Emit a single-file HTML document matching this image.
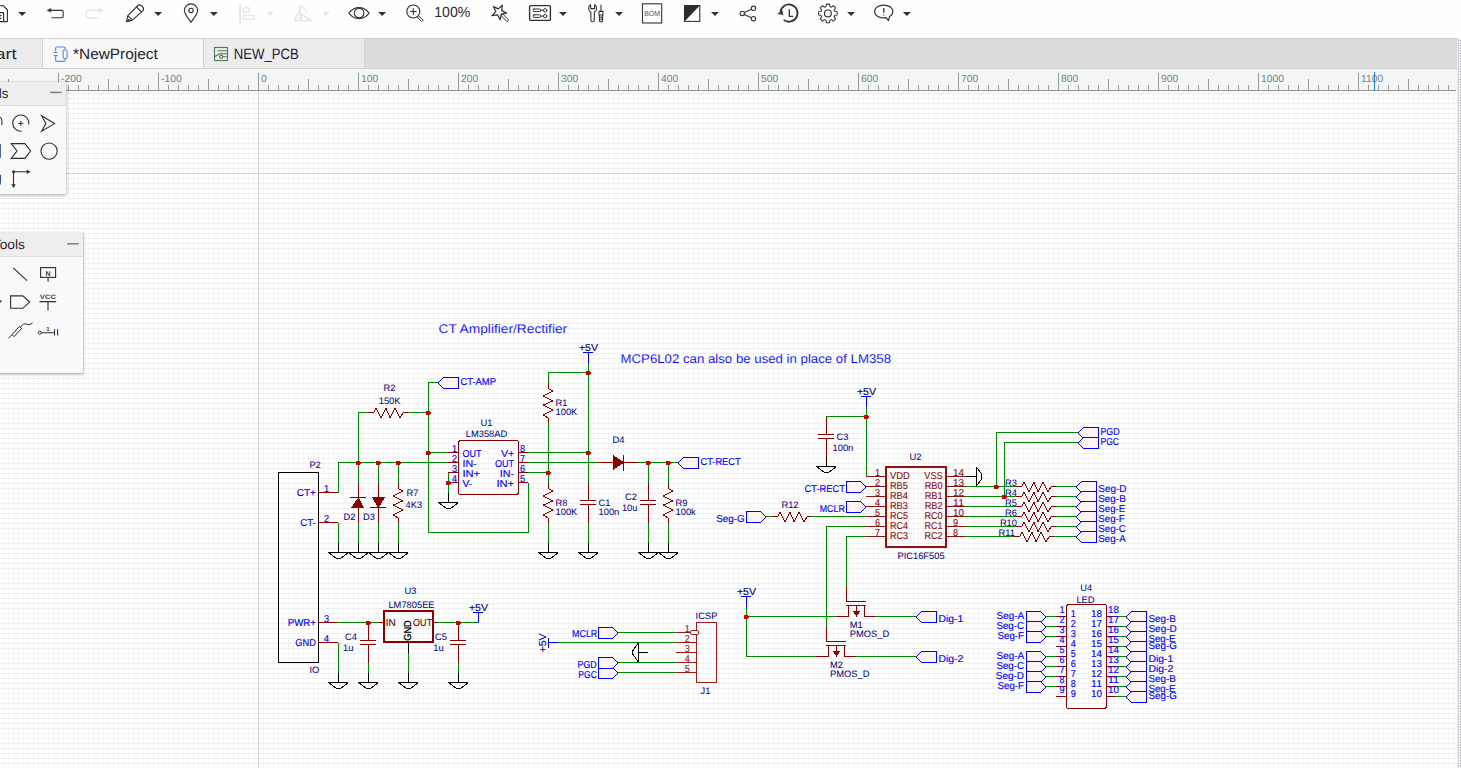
<!DOCTYPE html><html><head><meta charset="utf-8"><title>EasyEDA</title>
<style>html,body{margin:0;padding:0;background:#fff;overflow:hidden}svg{display:block}text{font-family:"Liberation Sans",sans-serif}text{text-rendering:geometricPrecision}</style></head><body>
<svg width="1461" height="768" viewBox="0 0 1461 768">
<defs><pattern id="g" x="3" y="3" width="5" height="5" patternUnits="userSpaceOnUse"><rect x="0" y="0" width="1" height="5" fill="#f4f6f5"/><rect x="0" y="0" width="5" height="1" fill="#f1f1f1"/><rect x="0" y="0" width="1" height="1" fill="#ebebeb"/></pattern>
<filter id="sh" x="-20%" y="-20%" width="140%" height="140%"><feGaussianBlur stdDeviation="1.6"/></filter></defs>
<rect width="1461" height="768" fill="#fff"/>
<rect x="0" y="91" width="1456" height="677" fill="url(#g)"/>
<rect x="258" y="91" width="1" height="677" fill="#d2d2d4"/>
<rect x="0" y="173" width="1456" height="1" fill="#d2d2d4"/>
<g shape-rendering="crispEdges" font-family="Liberation Sans, sans-serif" class="sc">
<rect x="278.5" y="472.5" width="40" height="190" fill="none" stroke="#000"/>
<path d="M318 492.5H338" stroke="#880000" stroke-width="1" fill="none" />
<path d="M318 522.5H338" stroke="#880000" stroke-width="1" fill="none" />
<path d="M318 622.5H338" stroke="#880000" stroke-width="1" fill="none" />
<path d="M318 642.5H338" stroke="#880000" stroke-width="1" fill="none" />
<text x="309.4" y="467.8" font-size="9.33" fill="#000080" stroke="#000080" stroke-width="0.02">P2</text>
<text x="315.85" y="495.8" font-size="10" fill="#0000FF" text-anchor="end" textLength="19.00" lengthAdjust="spacingAndGlyphs" stroke="#0000FF" stroke-width="0.15">CT+</text>
<text x="315.85" y="525.8" font-size="10" fill="#0000FF" text-anchor="end" textLength="15.60" lengthAdjust="spacingAndGlyphs" stroke="#0000FF" stroke-width="0.15">CT-</text>
<text x="315.85" y="625.8" font-size="10" fill="#0000FF" text-anchor="end" textLength="28.08" lengthAdjust="spacingAndGlyphs" stroke="#0000FF" stroke-width="0.15">PWR+</text>
<text x="315.85" y="645.8" font-size="10" fill="#0000FF" text-anchor="end" textLength="20.51" lengthAdjust="spacingAndGlyphs" stroke="#0000FF" stroke-width="0.15">GND</text>
<text x="323.95" y="492" font-size="10" fill="#0000FF" textLength="5.04" lengthAdjust="spacingAndGlyphs" stroke="#0000FF" stroke-width="0.15">1</text>
<text x="323.95" y="522" font-size="10" fill="#0000FF" textLength="5.04" lengthAdjust="spacingAndGlyphs" stroke="#0000FF" stroke-width="0.15">2</text>
<text x="323.95" y="622" font-size="10" fill="#0000FF" textLength="5.04" lengthAdjust="spacingAndGlyphs" stroke="#0000FF" stroke-width="0.15">3</text>
<text x="323.95" y="642" font-size="10" fill="#0000FF" textLength="5.04" lengthAdjust="spacingAndGlyphs" stroke="#0000FF" stroke-width="0.15">4</text>
<text x="309.5" y="673.2" font-size="9.33" fill="#000080" stroke="#000080" stroke-width="0.02">IO</text>
<path d="M338.5 462.5V492.5M338 462.5H448" stroke="#008800" stroke-width="1" fill="none" />
<path d="M338.5 522.5V542.5" stroke="#008800" stroke-width="1" fill="none" />
<path d="M358.5 412.5V482.5M358 412.5H368" stroke="#008800" stroke-width="1" fill="none" />
<path d="M408 412.5H428" stroke="#008800" stroke-width="1" fill="none" />
<path d="M378.5 462.5V482.5" stroke="#008800" stroke-width="1" fill="none" />
<path d="M398.5 462.5V482.5" stroke="#008800" stroke-width="1" fill="none" />
<path d="M358.5 522.5V542.5" stroke="#008800" stroke-width="1" fill="none" />
<path d="M378.5 522.5V542.5" stroke="#008800" stroke-width="1" fill="none" />
<path d="M398.5 522.5V542.5" stroke="#008800" stroke-width="1" fill="none" />
<path d="M338.5 542.5V552.5" stroke="#000000" stroke-width="1" fill="none" />
<path d="M328 552.5 L348 552.5" stroke="#000000" stroke-width="1" fill="none" />
<path d="M328.5 552.5 L336.5 558.5 L340.5 558.5 L348.5 552.5" stroke="#000000" stroke-width="1" fill="none" />
<path d="M358.5 542.5V552.5" stroke="#000000" stroke-width="1" fill="none" />
<path d="M348 552.5 L368 552.5" stroke="#000000" stroke-width="1" fill="none" />
<path d="M348.5 552.5 L356.5 558.5 L360.5 558.5 L368.5 552.5" stroke="#000000" stroke-width="1" fill="none" />
<path d="M378.5 542.5V552.5" stroke="#000000" stroke-width="1" fill="none" />
<path d="M368 552.5 L388 552.5" stroke="#000000" stroke-width="1" fill="none" />
<path d="M368.5 552.5 L376.5 558.5 L380.5 558.5 L388.5 552.5" stroke="#000000" stroke-width="1" fill="none" />
<path d="M398.5 542.5V552.5" stroke="#000000" stroke-width="1" fill="none" />
<path d="M388 552.5 L408 552.5" stroke="#000000" stroke-width="1" fill="none" />
<path d="M388.5 552.5 L396.5 558.5 L400.5 558.5 L408.5 552.5" stroke="#000000" stroke-width="1" fill="none" />
<path d="M368 412.5 L373.5 412.5 L376 408.5 L381 417.5 L386 408.5 L390 417.5 L395 408.5 L400 417.5 L403.5 412.5 L408 412.5" stroke="#880000" stroke-width="1" fill="none" />
<text x="389.4" y="390.6" font-size="9.33" fill="#000080" text-anchor="middle" stroke="#000080" stroke-width="0.02">R2</text>
<text x="389.6" y="403.8" font-size="9.33" fill="#000080" text-anchor="middle" stroke="#000080" stroke-width="0.02">150K</text>
<path d="M358.5 482.5V522.5" stroke="#880000" stroke-width="1" fill="none" />
<path d="M350 497.5 L366 497.5" stroke="#880000" stroke-width="1" fill="none" />
<path d="M358.4 497.4 L364.3 508 L350.8 508Z" fill="#880000"/>
<path d="M378.5 482.5V522.5" stroke="#880000" stroke-width="1" fill="none" />
<path d="M370 507.5 L386 507.5" stroke="#880000" stroke-width="1" fill="none" />
<path d="M378.5 508.2 L385.2 497 L371.8 497Z" fill="#880000"/>
<text x="343.5" y="520" font-size="9.33" fill="#000080" stroke="#000080" stroke-width="0.02">D2</text>
<text x="363" y="520" font-size="9.33" fill="#000080" stroke="#000080" stroke-width="0.02">D3</text>
<path d="M398.5 482.5 L398.5 488.5 L402.5 491 L393.5 496 L402.5 501 L393.5 505 L402.5 510 L393.5 515 L398.5 518.5 L398.5 522.5" stroke="#880000" stroke-width="1" fill="none" />
<text x="406.5" y="496" font-size="9.33" fill="#000080" stroke="#000080" stroke-width="0.02">R7</text>
<text x="405.5" y="508" font-size="9.33" fill="#000080" stroke="#000080" stroke-width="0.02">4K3</text>
<path d="M428.5 382.5V532.5M428 382.5H438" stroke="#008800" stroke-width="1" fill="none" />
<path d="M438.5 383 L443.5 377.5 L458.5 377.5 L458.5 388.5 L443.5 388.5Z" fill="#FCF4F4"/>
<path d="M443 377.5H458.5V388.5H443" stroke="#0000FF" fill="none"/>
<path d="M443 377.5H444L439 383H438ZM438 383H439L444 388.5H443Z" fill="#0000FF"/>
<text x="460.45" y="384.9" font-size="10" fill="#0000FF" textLength="35.48" lengthAdjust="spacingAndGlyphs" stroke="#0000FF" stroke-width="0.15">CT-AMP</text>
<path d="M428 452.5H448" stroke="#008800" stroke-width="1" fill="none" />
<path d="M428 532.5H528M528.5 482.5V532.5" stroke="#008800" stroke-width="1" fill="none" />
<rect x="458.5" y="440.5" width="60" height="54" rx="2.5" fill="none" stroke="#880000"/>
<path d="M448 452.5H458" stroke="#880000" stroke-width="1" fill="none" />
<path d="M518 452.5H528" stroke="#880000" stroke-width="1" fill="none" />
<text x="457.15" y="451.5" font-size="10" fill="#0000FF" text-anchor="end" textLength="5.04" lengthAdjust="spacingAndGlyphs" stroke="#0000FF" stroke-width="0.15">1</text>
<text x="519.95" y="451.5" font-size="10" fill="#0000FF" textLength="5.04" lengthAdjust="spacingAndGlyphs" stroke="#0000FF" stroke-width="0.15">8</text>
<path d="M448 462.5H458" stroke="#880000" stroke-width="1" fill="none" />
<path d="M518 462.5H528" stroke="#880000" stroke-width="1" fill="none" />
<text x="457.15" y="461.5" font-size="10" fill="#0000FF" text-anchor="end" textLength="5.04" lengthAdjust="spacingAndGlyphs" stroke="#0000FF" stroke-width="0.15">2</text>
<text x="519.95" y="461.5" font-size="10" fill="#0000FF" textLength="5.04" lengthAdjust="spacingAndGlyphs" stroke="#0000FF" stroke-width="0.15">7</text>
<path d="M448 472.5H458" stroke="#880000" stroke-width="1" fill="none" />
<path d="M518 472.5H528" stroke="#880000" stroke-width="1" fill="none" />
<text x="457.15" y="471.5" font-size="10" fill="#0000FF" text-anchor="end" textLength="5.04" lengthAdjust="spacingAndGlyphs" stroke="#0000FF" stroke-width="0.15">3</text>
<text x="519.95" y="471.5" font-size="10" fill="#0000FF" textLength="5.04" lengthAdjust="spacingAndGlyphs" stroke="#0000FF" stroke-width="0.15">6</text>
<path d="M448 482.5H458" stroke="#880000" stroke-width="1" fill="none" />
<path d="M518 482.5H528" stroke="#880000" stroke-width="1" fill="none" />
<text x="457.15" y="481.5" font-size="10" fill="#0000FF" text-anchor="end" textLength="5.04" lengthAdjust="spacingAndGlyphs" stroke="#0000FF" stroke-width="0.15">4</text>
<text x="519.95" y="481.5" font-size="10" fill="#0000FF" textLength="5.04" lengthAdjust="spacingAndGlyphs" stroke="#0000FF" stroke-width="0.15">5</text>
<text x="462.45" y="456.5" font-size="10" fill="#0000FF" textLength="19.03" lengthAdjust="spacingAndGlyphs" stroke="#0000FF" stroke-width="0.15">OUT</text>
<text x="514.05" y="456.5" font-size="10" fill="#0000FF" text-anchor="end" textLength="13.12" lengthAdjust="spacingAndGlyphs" stroke="#0000FF" stroke-width="0.15">V+</text>
<text x="462.45" y="466.5" font-size="10" fill="#0000FF" textLength="14.25" lengthAdjust="spacingAndGlyphs" stroke="#0000FF" stroke-width="0.15">IN-</text>
<text x="514.05" y="466.5" font-size="10" fill="#0000FF" text-anchor="end" textLength="19.03" lengthAdjust="spacingAndGlyphs" stroke="#0000FF" stroke-width="0.15">OUT</text>
<text x="462.45" y="476.5" font-size="10" fill="#0000FF" textLength="17.64" lengthAdjust="spacingAndGlyphs" stroke="#0000FF" stroke-width="0.15">IN+</text>
<text x="514.05" y="476.5" font-size="10" fill="#0000FF" text-anchor="end" textLength="14.25" lengthAdjust="spacingAndGlyphs" stroke="#0000FF" stroke-width="0.15">IN-</text>
<text x="462.45" y="486.5" font-size="10" fill="#0000FF" textLength="9.72" lengthAdjust="spacingAndGlyphs" stroke="#0000FF" stroke-width="0.15">V-</text>
<text x="514.05" y="486.5" font-size="10" fill="#0000FF" text-anchor="end" textLength="17.64" lengthAdjust="spacingAndGlyphs" stroke="#0000FF" stroke-width="0.15">IN+</text>
<text x="486.5" y="426" font-size="9.33" fill="#000080" text-anchor="middle" stroke="#000080" stroke-width="0.02">U1</text>
<text x="486.5" y="437" font-size="9.33" fill="#000080" text-anchor="middle" stroke="#000080" stroke-width="0.02">LM358AD</text>
<path d="M448.5 472.5V492.5" stroke="#008800" stroke-width="1" fill="none" />
<path d="M448.5 492.5V502.5" stroke="#000000" stroke-width="1" fill="none" />
<path d="M438 502.5 L458 502.5" stroke="#000000" stroke-width="1" fill="none" />
<path d="M438.5 502.5 L446.5 508.5 L450.5 508.5 L458.5 502.5" stroke="#000000" stroke-width="1" fill="none" />
<path d="M528 452.5H588" stroke="#008800" stroke-width="1" fill="none" />
<path d="M528 462.5H598" stroke="#008800" stroke-width="1" fill="none" />
<path d="M528 472.5H548" stroke="#008800" stroke-width="1" fill="none" />
<path d="M548.5 422.5V482.5" stroke="#008800" stroke-width="1" fill="none" />
<path d="M548.5 372.5V382.5M548 372.5H588" stroke="#008800" stroke-width="1" fill="none" />
<path d="M588.5 362.5V482.5" stroke="#008800" stroke-width="1" fill="none" />
<path d="M548.5 382.5 L548.5 388.5 L552.5 391 L543.5 396 L552.5 401 L543.5 405 L552.5 410 L543.5 415 L548.5 418.5 L548.5 422.5" stroke="#880000" stroke-width="1" fill="none" />
<text x="555.5" y="406" font-size="9.33" fill="#000080" stroke="#000080" stroke-width="0.02">R1</text>
<text x="555.5" y="415.3" font-size="9.33" fill="#000080" stroke="#000080" stroke-width="0.02">100K</text>
<path d="M588.5 352.5V362.5" stroke="#0000FF" stroke-width="1" fill="none" />
<path d="M583 352.5H593" stroke="#0000FF" stroke-width="1" fill="none" />
<text x="588.4" y="350.7" font-size="10" fill="#000080" text-anchor="middle" textLength="19.05" lengthAdjust="spacingAndGlyphs" stroke="#000080" stroke-width="0.15">+5V</text>
<path d="M548.5 482.5 L548.5 488.5 L552.5 491 L543.5 496 L552.5 501 L543.5 505 L552.5 510 L543.5 515 L548.5 518.5 L548.5 522.5" stroke="#880000" stroke-width="1" fill="none" />
<text x="555.5" y="506" font-size="9.33" fill="#000080" stroke="#000080" stroke-width="0.02">R8</text>
<text x="555.5" y="515.3" font-size="9.33" fill="#000080" stroke="#000080" stroke-width="0.02">100K</text>
<path d="M588.5 482.5V500.5" stroke="#880000" stroke-width="1" fill="none" />
<path d="M580 500.5H596" stroke="#880000" stroke-width="1" fill="none" />
<path d="M580 504.5H596" stroke="#880000" stroke-width="1" fill="none" />
<path d="M588.5 504.5V522.5" stroke="#880000" stroke-width="1" fill="none" />
<text x="598.5" y="506" font-size="9.33" fill="#000080" stroke="#000080" stroke-width="0.02">C1</text>
<text x="598.5" y="515.3" font-size="9.33" fill="#000080" stroke="#000080" stroke-width="0.02">100n</text>
<path d="M598 462.5H638" stroke="#880000" stroke-width="1" fill="none" />
<path d="M623.5 454.5V470.5" stroke="#880000" stroke-width="1" fill="none" />
<path d="M623.5 462.5 L613.5 456 L613.5 469Z" fill="#880000" stroke="#880000"/>
<text x="612.5" y="443.4" font-size="9.33" fill="#000080" stroke="#000080" stroke-width="0.02">D4</text>
<path d="M638 462.5H678" stroke="#008800" stroke-width="1" fill="none" />
<path d="M648.5 462.5V482.5" stroke="#008800" stroke-width="1" fill="none" />
<path d="M668.5 462.5V482.5" stroke="#008800" stroke-width="1" fill="none" />
<path d="M678.5 463 L683.5 457.5 L698.5 457.5 L698.5 468.5 L683.5 468.5Z" fill="#FCF4F4"/>
<path d="M683 457.5H698.5V468.5H683" stroke="#0000FF" fill="none"/>
<path d="M683 457.5H684L679 463H678ZM678 463H679L684 468.5H683Z" fill="#0000FF"/>
<text x="700.45" y="464.9" font-size="10" fill="#0000FF" textLength="40.25" lengthAdjust="spacingAndGlyphs" stroke="#0000FF" stroke-width="0.15">CT-RECT</text>
<path d="M648.5 482.5V500.5" stroke="#880000" stroke-width="1" fill="none" />
<path d="M640 500.5H656" stroke="#880000" stroke-width="1" fill="none" />
<path d="M640 504.5H656" stroke="#880000" stroke-width="1" fill="none" />
<path d="M648.5 504.5V522.5" stroke="#880000" stroke-width="1" fill="none" />
<text x="637" y="500" font-size="9.33" fill="#000080" text-anchor="end" stroke="#000080" stroke-width="0.02">C2</text>
<text x="637.5" y="511" font-size="9.33" fill="#000080" text-anchor="end" stroke="#000080" stroke-width="0.02">10u</text>
<path d="M668.5 482.5 L668.5 488.5 L672.5 491 L663.5 496 L672.5 501 L663.5 505 L672.5 510 L663.5 515 L668.5 518.5 L668.5 522.5" stroke="#880000" stroke-width="1" fill="none" />
<text x="675.5" y="506" font-size="9.33" fill="#000080" stroke="#000080" stroke-width="0.02">R9</text>
<text x="675.5" y="515.3" font-size="9.33" fill="#000080" stroke="#000080" stroke-width="0.02">100k</text>
<path d="M548.5 522.5V542.5" stroke="#008800" stroke-width="1" fill="none" />
<path d="M548.5 542.5V552.5" stroke="#000000" stroke-width="1" fill="none" />
<path d="M538 552.5 L558 552.5" stroke="#000000" stroke-width="1" fill="none" />
<path d="M538.5 552.5 L546.5 558.5 L550.5 558.5 L558.5 552.5" stroke="#000000" stroke-width="1" fill="none" />
<path d="M588.5 522.5V542.5" stroke="#008800" stroke-width="1" fill="none" />
<path d="M588.5 542.5V552.5" stroke="#000000" stroke-width="1" fill="none" />
<path d="M578 552.5 L598 552.5" stroke="#000000" stroke-width="1" fill="none" />
<path d="M578.5 552.5 L586.5 558.5 L590.5 558.5 L598.5 552.5" stroke="#000000" stroke-width="1" fill="none" />
<path d="M648.5 522.5V542.5" stroke="#008800" stroke-width="1" fill="none" />
<path d="M648.5 542.5V552.5" stroke="#000000" stroke-width="1" fill="none" />
<path d="M638 552.5 L658 552.5" stroke="#000000" stroke-width="1" fill="none" />
<path d="M638.5 552.5 L646.5 558.5 L650.5 558.5 L658.5 552.5" stroke="#000000" stroke-width="1" fill="none" />
<path d="M668.5 522.5V542.5" stroke="#008800" stroke-width="1" fill="none" />
<path d="M668.5 542.5V552.5" stroke="#000000" stroke-width="1" fill="none" />
<path d="M658 552.5 L678 552.5" stroke="#000000" stroke-width="1" fill="none" />
<path d="M658.5 552.5 L666.5 558.5 L670.5 558.5 L678.5 552.5" stroke="#000000" stroke-width="1" fill="none" />
<path d="M338 622.5H378" stroke="#008800" stroke-width="1" fill="none" />
<path d="M378 622.5H383" stroke="#880000" stroke-width="1" fill="none" />
<path d="M338.5 642.5V672.5" stroke="#008800" stroke-width="1" fill="none" />
<path d="M338.5 672.5V682.5" stroke="#000000" stroke-width="1" fill="none" />
<path d="M328 682.5 L348 682.5" stroke="#000000" stroke-width="1" fill="none" />
<path d="M328.5 682.5 L336.5 688.5 L340.5 688.5 L348.5 682.5" stroke="#000000" stroke-width="1" fill="none" />
<path d="M368.5 622.5V640.5" stroke="#880000" stroke-width="1" fill="none" />
<path d="M360 640.5H376" stroke="#880000" stroke-width="1" fill="none" />
<path d="M360 644.5H376" stroke="#880000" stroke-width="1" fill="none" />
<path d="M368.5 644.5V662.5" stroke="#880000" stroke-width="1" fill="none" />
<path d="M368.5 662.5V672.5" stroke="#008800" stroke-width="1" fill="none" />
<path d="M368.5 672.5V682.5" stroke="#000000" stroke-width="1" fill="none" />
<path d="M358 682.5 L378 682.5" stroke="#000000" stroke-width="1" fill="none" />
<path d="M358.5 682.5 L366.5 688.5 L370.5 688.5 L378.5 682.5" stroke="#000000" stroke-width="1" fill="none" />
<text x="345" y="640" font-size="9.33" fill="#000080" stroke="#000080" stroke-width="0.02">C4</text>
<text x="343" y="651.3" font-size="9.33" fill="#000080" stroke="#000080" stroke-width="0.02">1u</text>
<rect x="384" y="611" width="49" height="31" fill="none" stroke="#880000" stroke-width="2"/>
<text x="385.65" y="625.6" font-size="10" fill="#880000" textLength="10.01" lengthAdjust="spacingAndGlyphs" stroke="#880000" stroke-width="0.15">IN</text>
<text x="432.15" y="625.6" font-size="10" fill="#880000" text-anchor="end" textLength="19.03" lengthAdjust="spacingAndGlyphs" stroke="#880000" stroke-width="0.15">OUT</text>
<text x="411" y="630.5" font-size="10" fill="#000000" text-anchor="middle" textLength="20.51" lengthAdjust="spacingAndGlyphs" transform="rotate(-90 411 630.5)" style="stroke:#000;stroke-width:.3px">GND</text>
<text x="410.5" y="594" font-size="9.33" fill="#000080" text-anchor="middle" stroke="#000080" stroke-width="0.02">U3</text>
<text x="411.5" y="608.3" font-size="9.33" fill="#000080" text-anchor="middle" stroke="#000080" stroke-width="0.02">LM7805EE</text>
<path d="M408.5 642.5V652.5" stroke="#000000" stroke-width="1" fill="none" />
<path d="M408.5 652.5V672.5" stroke="#008800" stroke-width="1" fill="none" />
<path d="M408.5 672.5V682.5" stroke="#000000" stroke-width="1" fill="none" />
<path d="M398 682.5 L418 682.5" stroke="#000000" stroke-width="1" fill="none" />
<path d="M398.5 682.5 L406.5 688.5 L410.5 688.5 L418.5 682.5" stroke="#000000" stroke-width="1" fill="none" />
<path d="M433 622.5H438" stroke="#880000" stroke-width="1" fill="none" />
<path d="M438 622.5H478" stroke="#008800" stroke-width="1" fill="none" />
<path d="M478.5 612.5V622.5" stroke="#0000FF" stroke-width="1" fill="none" />
<path d="M473 612.5H483" stroke="#0000FF" stroke-width="1" fill="none" />
<text x="478.4" y="610.7" font-size="10" fill="#000080" text-anchor="middle" textLength="19.05" lengthAdjust="spacingAndGlyphs" stroke="#000080" stroke-width="0.15">+5V</text>
<path d="M458.5 622.5V640.5" stroke="#880000" stroke-width="1" fill="none" />
<path d="M450 640.5H466" stroke="#880000" stroke-width="1" fill="none" />
<path d="M450 644.5H466" stroke="#880000" stroke-width="1" fill="none" />
<path d="M458.5 644.5V662.5" stroke="#880000" stroke-width="1" fill="none" />
<path d="M458.5 662.5V672.5" stroke="#008800" stroke-width="1" fill="none" />
<path d="M458.5 672.5V682.5" stroke="#000000" stroke-width="1" fill="none" />
<path d="M448 682.5 L468 682.5" stroke="#000000" stroke-width="1" fill="none" />
<path d="M448.5 682.5 L456.5 688.5 L460.5 688.5 L468.5 682.5" stroke="#000000" stroke-width="1" fill="none" />
<text x="435" y="640" font-size="9.33" fill="#000080" stroke="#000080" stroke-width="0.02">C5</text>
<text x="433.3" y="651.3" font-size="9.33" fill="#000080" stroke="#000080" stroke-width="0.02">1u</text>
<rect x="696.5" y="622.5" width="20" height="60" fill="none" stroke="#9A1E1E"/>
<path d="M676 632.5H696" stroke="#9A1E1E" stroke-width="1" fill="none" />
<text x="684.85" y="631.5" font-size="10" fill="#9A1E1E" textLength="5.04" lengthAdjust="spacingAndGlyphs" stroke="#9A1E1E" stroke-width="0.15">1</text>
<path d="M676 642.5H696" stroke="#9A1E1E" stroke-width="1" fill="none" />
<text x="684.85" y="641.5" font-size="10" fill="#9A1E1E" textLength="5.04" lengthAdjust="spacingAndGlyphs" stroke="#9A1E1E" stroke-width="0.15">2</text>
<path d="M676 652.5H696" stroke="#9A1E1E" stroke-width="1" fill="none" />
<text x="684.85" y="651.5" font-size="10" fill="#9A1E1E" textLength="5.04" lengthAdjust="spacingAndGlyphs" stroke="#9A1E1E" stroke-width="0.15">3</text>
<path d="M676 662.5H696" stroke="#9A1E1E" stroke-width="1" fill="none" />
<text x="684.85" y="661.5" font-size="10" fill="#9A1E1E" textLength="5.04" lengthAdjust="spacingAndGlyphs" stroke="#9A1E1E" stroke-width="0.15">4</text>
<path d="M676 672.5H696" stroke="#9A1E1E" stroke-width="1" fill="none" />
<text x="684.85" y="671.5" font-size="10" fill="#9A1E1E" textLength="5.04" lengthAdjust="spacingAndGlyphs" stroke="#9A1E1E" stroke-width="0.15">5</text>
<ellipse cx="694.5" cy="632.5" rx="4" ry="2.5" fill="#fff" stroke="#9A1E1E"/>
<text x="706.5" y="619" font-size="9.33" fill="#000080" text-anchor="middle" stroke="#000080" stroke-width="0.02">ICSP</text>
<text x="705.5" y="693.5" font-size="9.33" fill="#000080" text-anchor="middle" stroke="#000080" stroke-width="0.02">J1</text>
<path d="M617.5 633 L612.5 627.5 L598.5 627.5 L598.5 638.5 L612.5 638.5Z" fill="#FCF4F4"/>
<path d="M613 627.5H598.5V638.5H613" stroke="#0000FF" fill="none"/>
<path d="M612 627.5H613L618 633H617ZM617 633H618L613 638.5H612Z" fill="#0000FF"/>
<text x="597.25" y="637.3" font-size="10" fill="#0000FF" text-anchor="end" textLength="25.17" lengthAdjust="spacingAndGlyphs" stroke="#0000FF" stroke-width="0.15">MCLR</text>
<path d="M618 632.5H676" stroke="#008800" stroke-width="1" fill="none" />
<path d="M548.5 637.5V647.5" stroke="#0000FF" stroke-width="1" fill="none" />
<path d="M548 642.5H558" stroke="#0000FF" stroke-width="1" fill="none" />
<path d="M558 642.5H676" stroke="#008800" stroke-width="1" fill="none" />
<text x="545.9" y="643" font-size="10" fill="#000080" text-anchor="middle" textLength="19.05" lengthAdjust="spacingAndGlyphs" transform="rotate(-90 545.9 643)" stroke="#000080" stroke-width="0.15">+5V</text>
<path d="M638 652.5H648" stroke="#000000" stroke-width="1" fill="none" />
<path d="M638.5 642.5V662.5" stroke="#000000" stroke-width="1" fill="none" />
<path d="M638.5 643 L632.9 650.5 L632.9 654.5 L638.5 662" stroke="#000000" stroke-width="1" fill="none" />
<path d="M617.5 673 L612.5 667.5 L598.5 667.5 L598.5 678.5 L612.5 678.5Z" fill="#FCF4F4"/>
<path d="M613 667.5H598.5V678.5H613" stroke="#0000FF" fill="none"/>
<path d="M612 667.5H613L618 673H617ZM617 673H618L613 678.5H612Z" fill="#0000FF"/>
<path d="M617.5 663 L612.5 657.5 L598.5 657.5 L598.5 668.5 L612.5 668.5Z" fill="#FCF4F4"/>
<path d="M613 657.5H598.5V668.5H613" stroke="#0000FF" fill="none"/>
<path d="M612 657.5H613L618 663H617ZM617 663H618L613 668.5H612Z" fill="#0000FF"/>
<text x="596.65" y="667.7" font-size="10" fill="#0000FF" text-anchor="end" textLength="19.16" lengthAdjust="spacingAndGlyphs" stroke="#0000FF" stroke-width="0.15">PGD</text>
<text x="596.85" y="677.8" font-size="10" fill="#0000FF" text-anchor="end" textLength="18.48" lengthAdjust="spacingAndGlyphs" stroke="#0000FF" stroke-width="0.15">PGC</text>
<path d="M618 662.5H676" stroke="#008800" stroke-width="1" fill="none" />
<path d="M618 672.5H676" stroke="#008800" stroke-width="1" fill="none" />
<path d="M746.5 596.5V606.5" stroke="#0000FF" stroke-width="1" fill="none" />
<path d="M741 596.5H751" stroke="#0000FF" stroke-width="1" fill="none" />
<text x="746.4" y="594.7" font-size="10" fill="#000080" text-anchor="middle" textLength="19.05" lengthAdjust="spacingAndGlyphs" stroke="#000080" stroke-width="0.15">+5V</text>
<path d="M746.5 606.5V656.5M746 656.5H816" stroke="#008800" stroke-width="1" fill="none" />
<path d="M746 616.5H836" stroke="#008800" stroke-width="1" fill="none" />
<path d="M836 616.5H848M848.5 605.5V616.5" stroke="#880000" stroke-width="1" fill="none" />
<path d="M864 616.5H876M864.5 605.5V616.5" stroke="#880000" stroke-width="1" fill="none" />
<path d="M856.5 605.5V616.5" stroke="#880000" stroke-width="1" fill="none" />
<path d="M846 605.5H866" stroke="#880000" stroke-width="1" fill="none" />
<path d="M846 601.5H866" stroke="#880000" stroke-width="1" fill="none" />
<path d="M846.5 586.5V601.5" stroke="#880000" stroke-width="1" fill="none" />
<path d="M852.8 611 L860.2 611 L856.5 617.1Z" fill="#880000"/>
<path d="M816 656.5H828M828.5 645.5V656.5" stroke="#880000" stroke-width="1" fill="none" />
<path d="M844 656.5H856M844.5 645.5V656.5" stroke="#880000" stroke-width="1" fill="none" />
<path d="M836.5 645.5V656.5" stroke="#880000" stroke-width="1" fill="none" />
<path d="M826 645.5H846" stroke="#880000" stroke-width="1" fill="none" />
<path d="M826 641.5H846" stroke="#880000" stroke-width="1" fill="none" />
<path d="M826.5 626.5V641.5" stroke="#880000" stroke-width="1" fill="none" />
<path d="M832.8 651 L840.2 651 L836.5 657.1Z" fill="#880000"/>
<path d="M876 616.5H916" stroke="#008800" stroke-width="1" fill="none" />
<path d="M856 656.5H916" stroke="#008800" stroke-width="1" fill="none" />
<path d="M916.5 617 L921.5 611.5 L936.5 611.5 L936.5 622.5 L921.5 622.5Z" fill="#FCF4F4"/>
<path d="M921 611.5H936.5V622.5H921" stroke="#0000FF" fill="none"/>
<path d="M921 611.5H922L917 617H916ZM916 617H917L922 622.5H921Z" fill="#0000FF"/>
<path d="M916.5 657 L921.5 651.5 L936.5 651.5 L936.5 662.5 L921.5 662.5Z" fill="#FCF4F4"/>
<path d="M921 651.5H936.5V662.5H921" stroke="#0000FF" fill="none"/>
<path d="M921 651.5H922L917 657H916ZM916 657H917L922 662.5H921Z" fill="#0000FF"/>
<text x="938.45" y="621.8" font-size="10" fill="#0000FF" textLength="24.84" lengthAdjust="spacingAndGlyphs" stroke="#0000FF" stroke-width="0.15">Dig-1</text>
<text x="938.45" y="661.8" font-size="10" fill="#0000FF" textLength="24.84" lengthAdjust="spacingAndGlyphs" stroke="#0000FF" stroke-width="0.15">Dig-2</text>
<text x="849.8" y="628" font-size="9.33" fill="#000080" stroke="#000080" stroke-width="0.02">M1</text>
<text x="849.8" y="637" font-size="9.33" fill="#000080" stroke="#000080" stroke-width="0.02">PMOS_D</text>
<text x="830" y="667.7" font-size="9.33" fill="#000080" stroke="#000080" stroke-width="0.02">M2</text>
<text x="830" y="676.7" font-size="9.33" fill="#000080" stroke="#000080" stroke-width="0.02">PMOS_D</text>
<path d="M846.5 536.5V586.5M846 536.5H866" stroke="#008800" stroke-width="1" fill="none" />
<path d="M826.5 526.5V626.5M826 526.5H866" stroke="#008800" stroke-width="1" fill="none" />
<path d="M866.5 396.5V406.5" stroke="#0000FF" stroke-width="1" fill="none" />
<path d="M861 396.5H871" stroke="#0000FF" stroke-width="1" fill="none" />
<text x="866.4" y="394.7" font-size="10" fill="#000080" text-anchor="middle" textLength="19.05" lengthAdjust="spacingAndGlyphs" stroke="#000080" stroke-width="0.15">+5V</text>
<path d="M866.5 406.5V476.5" stroke="#008800" stroke-width="1" fill="none" />
<path d="M826 416.5H866" stroke="#008800" stroke-width="1" fill="none" />
<path d="M826.5 416.5V434.5" stroke="#880000" stroke-width="1" fill="none" />
<path d="M818 434.5H834" stroke="#880000" stroke-width="1" fill="none" />
<path d="M818 438.5H834" stroke="#880000" stroke-width="1" fill="none" />
<path d="M826.5 438.5V456.5" stroke="#880000" stroke-width="1" fill="none" />
<path d="M826.5 456.5V466.5" stroke="#000000" stroke-width="1" fill="none" />
<path d="M816 466.5 L836 466.5" stroke="#000000" stroke-width="1" fill="none" />
<path d="M816.5 466.5 L824.5 472.5 L828.5 472.5 L836.5 466.5" stroke="#000000" stroke-width="1" fill="none" />
<text x="836.5" y="440" font-size="9.33" fill="#000080" stroke="#000080" stroke-width="0.02">C3</text>
<text x="832.5" y="451.2" font-size="9.33" fill="#000080" stroke="#000080" stroke-width="0.02">100n</text>
<rect x="886" y="467" width="60" height="80" fill="none" stroke="#8B1414" stroke-width="2"/>
<path d="M866 476.5H885" stroke="#8B1414" stroke-width="1" fill="none" />
<path d="M947 476.5H966" stroke="#8B1414" stroke-width="1" fill="none" />
<text x="889.95" y="479.4" font-size="10" fill="#8B1414" textLength="19.88" lengthAdjust="spacingAndGlyphs" stroke="#8B1414" stroke-width="0.15">VDD</text>
<text x="942.55" y="479.4" font-size="10" fill="#8B1414" text-anchor="end" textLength="18.25" lengthAdjust="spacingAndGlyphs" stroke="#8B1414" stroke-width="0.15">VSS</text>
<text x="875.05" y="475.5" font-size="10" fill="#8B1414" textLength="5.04" lengthAdjust="spacingAndGlyphs" stroke="#8B1414" stroke-width="0.15">1</text>
<text x="953.05" y="475.5" font-size="10" fill="#8B1414" textLength="10.97" lengthAdjust="spacingAndGlyphs" stroke="#8B1414" stroke-width="0.15">14</text>
<path d="M866 486.5H885" stroke="#8B1414" stroke-width="1" fill="none" />
<path d="M947 486.5H966" stroke="#8B1414" stroke-width="1" fill="none" />
<text x="889.95" y="489.4" font-size="10" fill="#8B1414" textLength="17.92" lengthAdjust="spacingAndGlyphs" stroke="#8B1414" stroke-width="0.15">RB5</text>
<text x="942.55" y="489.4" font-size="10" fill="#8B1414" text-anchor="end" textLength="17.92" lengthAdjust="spacingAndGlyphs" stroke="#8B1414" stroke-width="0.15">RB0</text>
<text x="875.05" y="485.5" font-size="10" fill="#8B1414" textLength="5.04" lengthAdjust="spacingAndGlyphs" stroke="#8B1414" stroke-width="0.15">2</text>
<text x="953.05" y="485.5" font-size="10" fill="#8B1414" textLength="10.97" lengthAdjust="spacingAndGlyphs" stroke="#8B1414" stroke-width="0.15">13</text>
<path d="M866 496.5H885" stroke="#8B1414" stroke-width="1" fill="none" />
<path d="M947 496.5H966" stroke="#8B1414" stroke-width="1" fill="none" />
<text x="889.95" y="499.4" font-size="10" fill="#8B1414" textLength="17.92" lengthAdjust="spacingAndGlyphs" stroke="#8B1414" stroke-width="0.15">RB4</text>
<text x="942.55" y="499.4" font-size="10" fill="#8B1414" text-anchor="end" textLength="17.92" lengthAdjust="spacingAndGlyphs" stroke="#8B1414" stroke-width="0.15">RB1</text>
<text x="875.05" y="495.5" font-size="10" fill="#8B1414" textLength="5.04" lengthAdjust="spacingAndGlyphs" stroke="#8B1414" stroke-width="0.15">3</text>
<text x="953.05" y="495.5" font-size="10" fill="#8B1414" textLength="10.97" lengthAdjust="spacingAndGlyphs" stroke="#8B1414" stroke-width="0.15">12</text>
<path d="M866 506.5H885" stroke="#8B1414" stroke-width="1" fill="none" />
<path d="M947 506.5H966" stroke="#8B1414" stroke-width="1" fill="none" />
<text x="889.95" y="509.4" font-size="10" fill="#8B1414" textLength="17.92" lengthAdjust="spacingAndGlyphs" stroke="#8B1414" stroke-width="0.15">RB3</text>
<text x="942.55" y="509.4" font-size="10" fill="#8B1414" text-anchor="end" textLength="17.92" lengthAdjust="spacingAndGlyphs" stroke="#8B1414" stroke-width="0.15">RB2</text>
<text x="875.05" y="505.5" font-size="10" fill="#8B1414" textLength="5.04" lengthAdjust="spacingAndGlyphs" stroke="#8B1414" stroke-width="0.15">4</text>
<text x="953.05" y="505.5" font-size="10" fill="#8B1414" textLength="10.97" lengthAdjust="spacingAndGlyphs" stroke="#8B1414" stroke-width="0.15">11</text>
<path d="M866 516.5H885" stroke="#8B1414" stroke-width="1" fill="none" />
<path d="M947 516.5H966" stroke="#8B1414" stroke-width="1" fill="none" />
<text x="889.95" y="519.4" font-size="10" fill="#8B1414" textLength="18.04" lengthAdjust="spacingAndGlyphs" stroke="#8B1414" stroke-width="0.15">RC5</text>
<text x="942.55" y="519.4" font-size="10" fill="#8B1414" text-anchor="end" textLength="18.04" lengthAdjust="spacingAndGlyphs" stroke="#8B1414" stroke-width="0.15">RC0</text>
<text x="875.05" y="515.5" font-size="10" fill="#8B1414" textLength="5.04" lengthAdjust="spacingAndGlyphs" stroke="#8B1414" stroke-width="0.15">5</text>
<text x="953.05" y="515.5" font-size="10" fill="#8B1414" textLength="10.97" lengthAdjust="spacingAndGlyphs" stroke="#8B1414" stroke-width="0.15">10</text>
<path d="M866 526.5H885" stroke="#8B1414" stroke-width="1" fill="none" />
<path d="M947 526.5H966" stroke="#8B1414" stroke-width="1" fill="none" />
<text x="889.95" y="529.4" font-size="10" fill="#8B1414" textLength="18.04" lengthAdjust="spacingAndGlyphs" stroke="#8B1414" stroke-width="0.15">RC4</text>
<text x="942.55" y="529.4" font-size="10" fill="#8B1414" text-anchor="end" textLength="18.04" lengthAdjust="spacingAndGlyphs" stroke="#8B1414" stroke-width="0.15">RC1</text>
<text x="875.05" y="525.5" font-size="10" fill="#8B1414" textLength="5.04" lengthAdjust="spacingAndGlyphs" stroke="#8B1414" stroke-width="0.15">6</text>
<text x="953.05" y="525.5" font-size="10" fill="#8B1414" textLength="5.04" lengthAdjust="spacingAndGlyphs" stroke="#8B1414" stroke-width="0.15">9</text>
<path d="M866 536.5H885" stroke="#8B1414" stroke-width="1" fill="none" />
<path d="M947 536.5H966" stroke="#8B1414" stroke-width="1" fill="none" />
<text x="889.95" y="539.4" font-size="10" fill="#8B1414" textLength="18.04" lengthAdjust="spacingAndGlyphs" stroke="#8B1414" stroke-width="0.15">RC3</text>
<text x="942.55" y="539.4" font-size="10" fill="#8B1414" text-anchor="end" textLength="18.04" lengthAdjust="spacingAndGlyphs" stroke="#8B1414" stroke-width="0.15">RC2</text>
<text x="875.05" y="535.5" font-size="10" fill="#8B1414" textLength="5.04" lengthAdjust="spacingAndGlyphs" stroke="#8B1414" stroke-width="0.15">7</text>
<text x="953.05" y="535.5" font-size="10" fill="#8B1414" textLength="5.04" lengthAdjust="spacingAndGlyphs" stroke="#8B1414" stroke-width="0.15">8</text>
<text x="915.5" y="460" font-size="9.33" fill="#000080" text-anchor="middle" stroke="#000080" stroke-width="0.02">U2</text>
<text x="921" y="558.7" font-size="9.33" fill="#000080" text-anchor="middle" stroke="#000080" stroke-width="0.02">PIC16F505</text>
<path d="M966 476.5H976" stroke="#000000" stroke-width="1" fill="none" />
<path d="M976.5 466.5V486.5" stroke="#000000" stroke-width="1" fill="none" />
<path d="M976.5 467 L981.9 474.5 L981.9 478.5 L976.5 486" stroke="#000000" stroke-width="1" fill="none" />
<path d="M865.5 487 L860.5 481.5 L846.5 481.5 L846.5 492.5 L860.5 492.5Z" fill="#FCF4F4"/>
<path d="M861 481.5H846.5V492.5H861" stroke="#0000FF" fill="none"/>
<path d="M860 481.5H861L866 487H865ZM865 487H866L861 492.5H860Z" fill="#0000FF"/>
<text x="844.85" y="491.8" font-size="10" fill="#0000FF" text-anchor="end" textLength="40.25" lengthAdjust="spacingAndGlyphs" stroke="#0000FF" stroke-width="0.15">CT-RECT</text>
<path d="M865.5 507 L860.5 501.5 L846.5 501.5 L846.5 512.5 L860.5 512.5Z" fill="#FCF4F4"/>
<path d="M861 501.5H846.5V512.5H861" stroke="#0000FF" fill="none"/>
<path d="M860 501.5H861L866 507H865ZM865 507H866L861 512.5H860Z" fill="#0000FF"/>
<text x="844.85" y="511.8" font-size="10" fill="#0000FF" text-anchor="end" textLength="25.17" lengthAdjust="spacingAndGlyphs" stroke="#0000FF" stroke-width="0.15">MCLR</text>
<path d="M765.5 517 L760.5 511.5 L746.5 511.5 L746.5 522.5 L760.5 522.5Z" fill="#FCF4F4"/>
<path d="M761 511.5H746.5V522.5H761" stroke="#0000FF" fill="none"/>
<path d="M760 511.5H761L766 517H765ZM765 517H766L761 522.5H760Z" fill="#0000FF"/>
<text x="744.65" y="521.8" font-size="10" fill="#0000FF" text-anchor="end" textLength="28.33" lengthAdjust="spacingAndGlyphs" stroke="#0000FF" stroke-width="0.15">Seg-G</text>
<path d="M766 516.5H772" stroke="#008800" stroke-width="1" fill="none" />
<path d="M772 516.5 L777.5 516.5 L780 512.5 L785 521.5 L790 512.5 L794 521.5 L799 512.5 L804 521.5 L807.5 516.5 L812 516.5" stroke="#880000" stroke-width="1" fill="none" />
<path d="M812 516.5H866" stroke="#008800" stroke-width="1" fill="none" />
<text x="790" y="508.3" font-size="9.33" fill="#000080" text-anchor="middle" stroke="#000080" stroke-width="0.02">R12</text>
<path d="M966 486.5H1016" stroke="#008800" stroke-width="1" fill="none" />
<path d="M996.5 432.5V486.5M996 432.5H1078" stroke="#008800" stroke-width="1" fill="none" />
<path d="M966 496.5H1016" stroke="#008800" stroke-width="1" fill="none" />
<path d="M1004.5 442.5V496.5M1004 442.5H1078" stroke="#008800" stroke-width="1" fill="none" />
<path d="M1078.5 433 L1083.5 427.5 L1098.5 427.5 L1098.5 438.5 L1083.5 438.5Z" fill="#FCF4F4"/>
<path d="M1083 427.5H1098.5V438.5H1083" stroke="#0000FF" fill="none"/>
<path d="M1083 427.5H1084L1079 433H1078ZM1078 433H1079L1084 438.5H1083Z" fill="#0000FF"/>
<path d="M1078.5 443 L1083.5 437.5 L1098.5 437.5 L1098.5 448.5 L1083.5 448.5Z" fill="#FCF4F4"/>
<path d="M1083 437.5H1098.5V448.5H1083" stroke="#0000FF" fill="none"/>
<path d="M1083 437.5H1084L1079 443H1078ZM1078 443H1079L1084 448.5H1083Z" fill="#0000FF"/>
<text x="1100.45" y="435.3" font-size="10" fill="#0000FF" textLength="19.16" lengthAdjust="spacingAndGlyphs" stroke="#0000FF" stroke-width="0.15">PGD</text>
<text x="1100.45" y="445.3" font-size="10" fill="#0000FF" textLength="18.48" lengthAdjust="spacingAndGlyphs" stroke="#0000FF" stroke-width="0.15">PGC</text>
<path d="M966 486.5H1016" stroke="#008800" stroke-width="1" fill="none" />
<path d="M1016 486.5 L1021.5 486.5 L1024 482.5 L1029 491.5 L1034 482.5 L1038 491.5 L1043 482.5 L1048 491.5 L1051.5 486.5 L1056 486.5" stroke="#880000" stroke-width="1" fill="none" />
<path d="M1056 486.5H1076" stroke="#008800" stroke-width="1" fill="none" />
<path d="M1076.5 487 L1081.5 481.5 L1096.5 481.5 L1096.5 492.5 L1081.5 492.5Z" fill="#FCF4F4"/>
<path d="M1081 481.5H1096.5V492.5H1081" stroke="#0000FF" fill="none"/>
<path d="M1081 481.5H1082L1077 487H1076ZM1076 487H1077L1082 492.5H1081Z" fill="#0000FF"/>
<text x="1017" y="485.5" font-size="9.33" fill="#000080" text-anchor="end" stroke="#000080" stroke-width="0.02">R3</text>
<text x="1098.25" y="491.5" font-size="10" fill="#0000FF" textLength="28.29" lengthAdjust="spacingAndGlyphs" stroke="#0000FF" stroke-width="0.15">Seg-D</text>
<path d="M966 496.5H1016" stroke="#008800" stroke-width="1" fill="none" />
<path d="M1016 496.5 L1021.5 496.5 L1024 492.5 L1029 501.5 L1034 492.5 L1038 501.5 L1043 492.5 L1048 501.5 L1051.5 496.5 L1056 496.5" stroke="#880000" stroke-width="1" fill="none" />
<path d="M1056 496.5H1076" stroke="#008800" stroke-width="1" fill="none" />
<path d="M1076.5 497 L1081.5 491.5 L1096.5 491.5 L1096.5 502.5 L1081.5 502.5Z" fill="#FCF4F4"/>
<path d="M1081 491.5H1096.5V502.5H1081" stroke="#0000FF" fill="none"/>
<path d="M1081 491.5H1082L1077 497H1076ZM1076 497H1077L1082 502.5H1081Z" fill="#0000FF"/>
<text x="1017" y="495.5" font-size="9.33" fill="#000080" text-anchor="end" stroke="#000080" stroke-width="0.02">R4</text>
<text x="1098.25" y="501.5" font-size="10" fill="#0000FF" textLength="27.50" lengthAdjust="spacingAndGlyphs" stroke="#0000FF" stroke-width="0.15">Seg-B</text>
<path d="M966 506.5H1016" stroke="#008800" stroke-width="1" fill="none" />
<path d="M1016 506.5 L1021.5 506.5 L1024 502.5 L1029 511.5 L1034 502.5 L1038 511.5 L1043 502.5 L1048 511.5 L1051.5 506.5 L1056 506.5" stroke="#880000" stroke-width="1" fill="none" />
<path d="M1056 506.5H1076" stroke="#008800" stroke-width="1" fill="none" />
<path d="M1076.5 507 L1081.5 501.5 L1096.5 501.5 L1096.5 512.5 L1081.5 512.5Z" fill="#FCF4F4"/>
<path d="M1081 501.5H1096.5V512.5H1081" stroke="#0000FF" fill="none"/>
<path d="M1081 501.5H1082L1077 507H1076ZM1076 507H1077L1082 512.5H1081Z" fill="#0000FF"/>
<text x="1017" y="505.5" font-size="9.33" fill="#000080" text-anchor="end" stroke="#000080" stroke-width="0.02">R5</text>
<text x="1098.25" y="511.5" font-size="10" fill="#0000FF" textLength="27.00" lengthAdjust="spacingAndGlyphs" stroke="#0000FF" stroke-width="0.15">Seg-E</text>
<path d="M966 516.5H1016" stroke="#008800" stroke-width="1" fill="none" />
<path d="M1016 516.5 L1021.5 516.5 L1024 512.5 L1029 521.5 L1034 512.5 L1038 521.5 L1043 512.5 L1048 521.5 L1051.5 516.5 L1056 516.5" stroke="#880000" stroke-width="1" fill="none" />
<path d="M1056 516.5H1076" stroke="#008800" stroke-width="1" fill="none" />
<path d="M1076.5 517 L1081.5 511.5 L1096.5 511.5 L1096.5 522.5 L1081.5 522.5Z" fill="#FCF4F4"/>
<path d="M1081 511.5H1096.5V522.5H1081" stroke="#0000FF" fill="none"/>
<path d="M1081 511.5H1082L1077 517H1076ZM1076 517H1077L1082 522.5H1081Z" fill="#0000FF"/>
<text x="1017" y="515.5" font-size="9.33" fill="#000080" text-anchor="end" stroke="#000080" stroke-width="0.02">R6</text>
<text x="1098.25" y="521.5" font-size="10" fill="#0000FF" textLength="26.46" lengthAdjust="spacingAndGlyphs" stroke="#0000FF" stroke-width="0.15">Seg-F</text>
<path d="M966 526.5H1016" stroke="#008800" stroke-width="1" fill="none" />
<path d="M1016 526.5 L1021.5 526.5 L1024 522.5 L1029 531.5 L1034 522.5 L1038 531.5 L1043 522.5 L1048 531.5 L1051.5 526.5 L1056 526.5" stroke="#880000" stroke-width="1" fill="none" />
<path d="M1056 526.5H1076" stroke="#008800" stroke-width="1" fill="none" />
<path d="M1076.5 527 L1081.5 521.5 L1096.5 521.5 L1096.5 532.5 L1081.5 532.5Z" fill="#FCF4F4"/>
<path d="M1081 521.5H1096.5V532.5H1081" stroke="#0000FF" fill="none"/>
<path d="M1081 521.5H1082L1077 527H1076ZM1076 527H1077L1082 532.5H1081Z" fill="#0000FF"/>
<text x="1017" y="525.5" font-size="9.33" fill="#000080" text-anchor="end" stroke="#000080" stroke-width="0.02">R10</text>
<text x="1098.25" y="531.5" font-size="10" fill="#0000FF" textLength="27.61" lengthAdjust="spacingAndGlyphs" stroke="#0000FF" stroke-width="0.15">Seg-C</text>
<path d="M966 536.5H1014" stroke="#008800" stroke-width="1" fill="none" />
<path d="M1014 536.5 L1019.5 536.5 L1022 532.5 L1027 541.5 L1032 532.5 L1036 541.5 L1041 532.5 L1046 541.5 L1049.5 536.5 L1054 536.5" stroke="#880000" stroke-width="1" fill="none" />
<path d="M1054 536.5H1076" stroke="#008800" stroke-width="1" fill="none" />
<path d="M1076.5 537 L1081.5 531.5 L1096.5 531.5 L1096.5 542.5 L1081.5 542.5Z" fill="#FCF4F4"/>
<path d="M1081 531.5H1096.5V542.5H1081" stroke="#0000FF" fill="none"/>
<path d="M1081 531.5H1082L1077 537H1076ZM1076 537H1077L1082 542.5H1081Z" fill="#0000FF"/>
<text x="1015" y="535.5" font-size="9.33" fill="#000080" text-anchor="end" stroke="#000080" stroke-width="0.02">R11</text>
<text x="1098.25" y="541.5" font-size="10" fill="#0000FF" textLength="27.48" lengthAdjust="spacingAndGlyphs" stroke="#0000FF" stroke-width="0.15">Seg-A</text>
<rect x="1066.5" y="604.5" width="40" height="104" rx="2.5" fill="none" stroke="#880000"/>
<text x="1086.3" y="591.4" font-size="9.33" fill="#000080" text-anchor="middle" stroke="#000080" stroke-width="0.02">U4</text>
<text x="1085.5" y="602.8" font-size="9.33" fill="#000080" text-anchor="middle" stroke="#000080" stroke-width="0.02">LED</text>
<path d="M1056 616.5H1066" stroke="#880000" stroke-width="1" fill="none" />
<path d="M1106 616.5H1116" stroke="#880000" stroke-width="1" fill="none" />
<text x="1064.55" y="612.5" font-size="10" fill="#0000FF" text-anchor="end" textLength="5.04" lengthAdjust="spacingAndGlyphs" stroke="#0000FF" stroke-width="0.15">1</text>
<text x="1070.75" y="616.5" font-size="10" fill="#0000FF" textLength="5.04" lengthAdjust="spacingAndGlyphs" stroke="#0000FF" stroke-width="0.15">1</text>
<text x="1107.95" y="612.5" font-size="10" fill="#0000FF" textLength="10.97" lengthAdjust="spacingAndGlyphs" stroke="#0000FF" stroke-width="0.15">18</text>
<text x="1102.05" y="616.5" font-size="10" fill="#0000FF" text-anchor="end" textLength="10.97" lengthAdjust="spacingAndGlyphs" stroke="#0000FF" stroke-width="0.15">18</text>
<path d="M1046 616.5H1056" stroke="#008800" stroke-width="1" fill="none" />
<path d="M1045.5 617 L1040.5 611.5 L1026.5 611.5 L1026.5 622.5 L1040.5 622.5Z" fill="#FCF4F4"/>
<path d="M1041 611.5H1026.5V622.5H1041" stroke="#0000FF" fill="none"/>
<path d="M1040 611.5H1041L1046 617H1045ZM1045 617H1046L1041 622.5H1040Z" fill="#0000FF"/>
<text x="1024.05" y="618.8" font-size="10" fill="#0000FF" text-anchor="end" textLength="27.48" lengthAdjust="spacingAndGlyphs" stroke="#0000FF" stroke-width="0.15">Seg-A</text>
<path d="M1116 616.5H1126" stroke="#008800" stroke-width="1" fill="none" />
<path d="M1126.5 617 L1131.5 611.5 L1146.5 611.5 L1146.5 622.5 L1131.5 622.5Z" fill="#FCF4F4"/>
<path d="M1131 611.5H1146.5V622.5H1131" stroke="#0000FF" fill="none"/>
<path d="M1131 611.5H1132L1127 617H1126ZM1126 617H1127L1132 622.5H1131Z" fill="#0000FF"/>
<text x="1148.45" y="621.5" font-size="10" fill="#0000FF" textLength="27.50" lengthAdjust="spacingAndGlyphs" stroke="#0000FF" stroke-width="0.15">Seg-B</text>
<path d="M1056 626.5H1066" stroke="#880000" stroke-width="1" fill="none" />
<path d="M1106 626.5H1116" stroke="#880000" stroke-width="1" fill="none" />
<text x="1064.55" y="622.5" font-size="10" fill="#0000FF" text-anchor="end" textLength="5.04" lengthAdjust="spacingAndGlyphs" stroke="#0000FF" stroke-width="0.15">2</text>
<text x="1070.75" y="626.5" font-size="10" fill="#0000FF" textLength="5.04" lengthAdjust="spacingAndGlyphs" stroke="#0000FF" stroke-width="0.15">2</text>
<text x="1107.95" y="622.5" font-size="10" fill="#0000FF" textLength="10.97" lengthAdjust="spacingAndGlyphs" stroke="#0000FF" stroke-width="0.15">17</text>
<text x="1102.05" y="626.5" font-size="10" fill="#0000FF" text-anchor="end" textLength="10.97" lengthAdjust="spacingAndGlyphs" stroke="#0000FF" stroke-width="0.15">17</text>
<path d="M1046 626.5H1056" stroke="#008800" stroke-width="1" fill="none" />
<path d="M1045.5 627 L1040.5 621.5 L1026.5 621.5 L1026.5 632.5 L1040.5 632.5Z" fill="#FCF4F4"/>
<path d="M1041 621.5H1026.5V632.5H1041" stroke="#0000FF" fill="none"/>
<path d="M1040 621.5H1041L1046 627H1045ZM1045 627H1046L1041 632.5H1040Z" fill="#0000FF"/>
<text x="1024.05" y="628.8" font-size="10" fill="#0000FF" text-anchor="end" textLength="27.61" lengthAdjust="spacingAndGlyphs" stroke="#0000FF" stroke-width="0.15">Seg-C</text>
<path d="M1116 626.5H1126" stroke="#008800" stroke-width="1" fill="none" />
<path d="M1126.5 627 L1131.5 621.5 L1146.5 621.5 L1146.5 632.5 L1131.5 632.5Z" fill="#FCF4F4"/>
<path d="M1131 621.5H1146.5V632.5H1131" stroke="#0000FF" fill="none"/>
<path d="M1131 621.5H1132L1127 627H1126ZM1126 627H1127L1132 632.5H1131Z" fill="#0000FF"/>
<text x="1148.45" y="631.5" font-size="10" fill="#0000FF" textLength="28.29" lengthAdjust="spacingAndGlyphs" stroke="#0000FF" stroke-width="0.15">Seg-D</text>
<path d="M1056 636.5H1066" stroke="#880000" stroke-width="1" fill="none" />
<path d="M1106 636.5H1116" stroke="#880000" stroke-width="1" fill="none" />
<text x="1064.55" y="632.5" font-size="10" fill="#0000FF" text-anchor="end" textLength="5.04" lengthAdjust="spacingAndGlyphs" stroke="#0000FF" stroke-width="0.15">3</text>
<text x="1070.75" y="636.5" font-size="10" fill="#0000FF" textLength="5.04" lengthAdjust="spacingAndGlyphs" stroke="#0000FF" stroke-width="0.15">3</text>
<text x="1107.95" y="632.5" font-size="10" fill="#0000FF" textLength="10.97" lengthAdjust="spacingAndGlyphs" stroke="#0000FF" stroke-width="0.15">16</text>
<text x="1102.05" y="636.5" font-size="10" fill="#0000FF" text-anchor="end" textLength="10.97" lengthAdjust="spacingAndGlyphs" stroke="#0000FF" stroke-width="0.15">16</text>
<path d="M1046 636.5H1056" stroke="#008800" stroke-width="1" fill="none" />
<path d="M1045.5 637 L1040.5 631.5 L1026.5 631.5 L1026.5 642.5 L1040.5 642.5Z" fill="#FCF4F4"/>
<path d="M1041 631.5H1026.5V642.5H1041" stroke="#0000FF" fill="none"/>
<path d="M1040 631.5H1041L1046 637H1045ZM1045 637H1046L1041 642.5H1040Z" fill="#0000FF"/>
<text x="1024.05" y="638.8" font-size="10" fill="#0000FF" text-anchor="end" textLength="26.46" lengthAdjust="spacingAndGlyphs" stroke="#0000FF" stroke-width="0.15">Seg-F</text>
<path d="M1116 636.5H1126" stroke="#008800" stroke-width="1" fill="none" />
<path d="M1126.5 637 L1131.5 631.5 L1146.5 631.5 L1146.5 642.5 L1131.5 642.5Z" fill="#FCF4F4"/>
<path d="M1131 631.5H1146.5V642.5H1131" stroke="#0000FF" fill="none"/>
<path d="M1131 631.5H1132L1127 637H1126ZM1126 637H1127L1132 642.5H1131Z" fill="#0000FF"/>
<text x="1148.45" y="641.5" font-size="10" fill="#0000FF" textLength="27.00" lengthAdjust="spacingAndGlyphs" stroke="#0000FF" stroke-width="0.15">Seg-E</text>
<path d="M1056 646.5H1066" stroke="#880000" stroke-width="1" fill="none" />
<path d="M1106 646.5H1116" stroke="#880000" stroke-width="1" fill="none" />
<text x="1064.55" y="642.5" font-size="10" fill="#0000FF" text-anchor="end" textLength="5.04" lengthAdjust="spacingAndGlyphs" stroke="#0000FF" stroke-width="0.15">4</text>
<text x="1070.75" y="646.5" font-size="10" fill="#0000FF" textLength="5.04" lengthAdjust="spacingAndGlyphs" stroke="#0000FF" stroke-width="0.15">4</text>
<text x="1107.95" y="642.5" font-size="10" fill="#0000FF" textLength="10.97" lengthAdjust="spacingAndGlyphs" stroke="#0000FF" stroke-width="0.15">15</text>
<text x="1102.05" y="646.5" font-size="10" fill="#0000FF" text-anchor="end" textLength="10.97" lengthAdjust="spacingAndGlyphs" stroke="#0000FF" stroke-width="0.15">15</text>
<path d="M1116 646.5H1126" stroke="#008800" stroke-width="1" fill="none" />
<path d="M1126.5 647 L1131.5 641.5 L1146.5 641.5 L1146.5 652.5 L1131.5 652.5Z" fill="#FCF4F4"/>
<path d="M1131 641.5H1146.5V652.5H1131" stroke="#0000FF" fill="none"/>
<path d="M1131 641.5H1132L1127 647H1126ZM1126 647H1127L1132 652.5H1131Z" fill="#0000FF"/>
<text x="1148.45" y="648.5" font-size="10" fill="#0000FF" textLength="28.33" lengthAdjust="spacingAndGlyphs" stroke="#0000FF" stroke-width="0.15">Seg-G</text>
<path d="M1056 656.5H1066" stroke="#880000" stroke-width="1" fill="none" />
<path d="M1106 656.5H1116" stroke="#880000" stroke-width="1" fill="none" />
<text x="1064.55" y="652.5" font-size="10" fill="#0000FF" text-anchor="end" textLength="5.04" lengthAdjust="spacingAndGlyphs" stroke="#0000FF" stroke-width="0.15">5</text>
<text x="1070.75" y="656.5" font-size="10" fill="#0000FF" textLength="5.04" lengthAdjust="spacingAndGlyphs" stroke="#0000FF" stroke-width="0.15">5</text>
<text x="1107.95" y="652.5" font-size="10" fill="#0000FF" textLength="10.97" lengthAdjust="spacingAndGlyphs" stroke="#0000FF" stroke-width="0.15">14</text>
<text x="1102.05" y="656.5" font-size="10" fill="#0000FF" text-anchor="end" textLength="10.97" lengthAdjust="spacingAndGlyphs" stroke="#0000FF" stroke-width="0.15">14</text>
<path d="M1046 656.5H1056" stroke="#008800" stroke-width="1" fill="none" />
<path d="M1045.5 657 L1040.5 651.5 L1026.5 651.5 L1026.5 662.5 L1040.5 662.5Z" fill="#FCF4F4"/>
<path d="M1041 651.5H1026.5V662.5H1041" stroke="#0000FF" fill="none"/>
<path d="M1040 651.5H1041L1046 657H1045ZM1045 657H1046L1041 662.5H1040Z" fill="#0000FF"/>
<text x="1024.05" y="658.8" font-size="10" fill="#0000FF" text-anchor="end" textLength="27.48" lengthAdjust="spacingAndGlyphs" stroke="#0000FF" stroke-width="0.15">Seg-A</text>
<path d="M1116 656.5H1126" stroke="#008800" stroke-width="1" fill="none" />
<path d="M1126.5 657 L1131.5 651.5 L1146.5 651.5 L1146.5 662.5 L1131.5 662.5Z" fill="#FCF4F4"/>
<path d="M1131 651.5H1146.5V662.5H1131" stroke="#0000FF" fill="none"/>
<path d="M1131 651.5H1132L1127 657H1126ZM1126 657H1127L1132 662.5H1131Z" fill="#0000FF"/>
<text x="1148.45" y="661.5" font-size="10" fill="#0000FF" textLength="24.84" lengthAdjust="spacingAndGlyphs" stroke="#0000FF" stroke-width="0.15">Dig-1</text>
<path d="M1056 666.5H1066" stroke="#880000" stroke-width="1" fill="none" />
<path d="M1106 666.5H1116" stroke="#880000" stroke-width="1" fill="none" />
<text x="1064.55" y="662.5" font-size="10" fill="#0000FF" text-anchor="end" textLength="5.04" lengthAdjust="spacingAndGlyphs" stroke="#0000FF" stroke-width="0.15">6</text>
<text x="1070.75" y="666.5" font-size="10" fill="#0000FF" textLength="5.04" lengthAdjust="spacingAndGlyphs" stroke="#0000FF" stroke-width="0.15">6</text>
<text x="1107.95" y="662.5" font-size="10" fill="#0000FF" textLength="10.97" lengthAdjust="spacingAndGlyphs" stroke="#0000FF" stroke-width="0.15">13</text>
<text x="1102.05" y="666.5" font-size="10" fill="#0000FF" text-anchor="end" textLength="10.97" lengthAdjust="spacingAndGlyphs" stroke="#0000FF" stroke-width="0.15">13</text>
<path d="M1046 666.5H1056" stroke="#008800" stroke-width="1" fill="none" />
<path d="M1045.5 667 L1040.5 661.5 L1026.5 661.5 L1026.5 672.5 L1040.5 672.5Z" fill="#FCF4F4"/>
<path d="M1041 661.5H1026.5V672.5H1041" stroke="#0000FF" fill="none"/>
<path d="M1040 661.5H1041L1046 667H1045ZM1045 667H1046L1041 672.5H1040Z" fill="#0000FF"/>
<text x="1024.05" y="668.8" font-size="10" fill="#0000FF" text-anchor="end" textLength="27.61" lengthAdjust="spacingAndGlyphs" stroke="#0000FF" stroke-width="0.15">Seg-C</text>
<path d="M1116 666.5H1126" stroke="#008800" stroke-width="1" fill="none" />
<path d="M1126.5 667 L1131.5 661.5 L1146.5 661.5 L1146.5 672.5 L1131.5 672.5Z" fill="#FCF4F4"/>
<path d="M1131 661.5H1146.5V672.5H1131" stroke="#0000FF" fill="none"/>
<path d="M1131 661.5H1132L1127 667H1126ZM1126 667H1127L1132 672.5H1131Z" fill="#0000FF"/>
<text x="1148.45" y="671.5" font-size="10" fill="#0000FF" textLength="24.84" lengthAdjust="spacingAndGlyphs" stroke="#0000FF" stroke-width="0.15">Dig-2</text>
<path d="M1056 676.5H1066" stroke="#880000" stroke-width="1" fill="none" />
<path d="M1106 676.5H1116" stroke="#880000" stroke-width="1" fill="none" />
<text x="1064.55" y="672.5" font-size="10" fill="#0000FF" text-anchor="end" textLength="5.04" lengthAdjust="spacingAndGlyphs" stroke="#0000FF" stroke-width="0.15">7</text>
<text x="1070.75" y="676.5" font-size="10" fill="#0000FF" textLength="5.04" lengthAdjust="spacingAndGlyphs" stroke="#0000FF" stroke-width="0.15">7</text>
<text x="1107.95" y="672.5" font-size="10" fill="#0000FF" textLength="10.97" lengthAdjust="spacingAndGlyphs" stroke="#0000FF" stroke-width="0.15">12</text>
<text x="1102.05" y="676.5" font-size="10" fill="#0000FF" text-anchor="end" textLength="10.97" lengthAdjust="spacingAndGlyphs" stroke="#0000FF" stroke-width="0.15">12</text>
<path d="M1046 676.5H1056" stroke="#008800" stroke-width="1" fill="none" />
<path d="M1045.5 677 L1040.5 671.5 L1026.5 671.5 L1026.5 682.5 L1040.5 682.5Z" fill="#FCF4F4"/>
<path d="M1041 671.5H1026.5V682.5H1041" stroke="#0000FF" fill="none"/>
<path d="M1040 671.5H1041L1046 677H1045ZM1045 677H1046L1041 682.5H1040Z" fill="#0000FF"/>
<text x="1024.05" y="678.8" font-size="10" fill="#0000FF" text-anchor="end" textLength="28.29" lengthAdjust="spacingAndGlyphs" stroke="#0000FF" stroke-width="0.15">Seg-D</text>
<path d="M1116 676.5H1126" stroke="#008800" stroke-width="1" fill="none" />
<path d="M1126.5 677 L1131.5 671.5 L1146.5 671.5 L1146.5 682.5 L1131.5 682.5Z" fill="#FCF4F4"/>
<path d="M1131 671.5H1146.5V682.5H1131" stroke="#0000FF" fill="none"/>
<path d="M1131 671.5H1132L1127 677H1126ZM1126 677H1127L1132 682.5H1131Z" fill="#0000FF"/>
<text x="1148.45" y="681.5" font-size="10" fill="#0000FF" textLength="27.50" lengthAdjust="spacingAndGlyphs" stroke="#0000FF" stroke-width="0.15">Seg-B</text>
<path d="M1056 686.5H1066" stroke="#880000" stroke-width="1" fill="none" />
<path d="M1106 686.5H1116" stroke="#880000" stroke-width="1" fill="none" />
<text x="1064.55" y="682.5" font-size="10" fill="#0000FF" text-anchor="end" textLength="5.04" lengthAdjust="spacingAndGlyphs" stroke="#0000FF" stroke-width="0.15">8</text>
<text x="1070.75" y="686.5" font-size="10" fill="#0000FF" textLength="5.04" lengthAdjust="spacingAndGlyphs" stroke="#0000FF" stroke-width="0.15">8</text>
<text x="1107.95" y="682.5" font-size="10" fill="#0000FF" textLength="10.97" lengthAdjust="spacingAndGlyphs" stroke="#0000FF" stroke-width="0.15">11</text>
<text x="1102.05" y="686.5" font-size="10" fill="#0000FF" text-anchor="end" textLength="10.97" lengthAdjust="spacingAndGlyphs" stroke="#0000FF" stroke-width="0.15">11</text>
<path d="M1046 686.5H1056" stroke="#008800" stroke-width="1" fill="none" />
<path d="M1045.5 687 L1040.5 681.5 L1026.5 681.5 L1026.5 692.5 L1040.5 692.5Z" fill="#FCF4F4"/>
<path d="M1041 681.5H1026.5V692.5H1041" stroke="#0000FF" fill="none"/>
<path d="M1040 681.5H1041L1046 687H1045ZM1045 687H1046L1041 692.5H1040Z" fill="#0000FF"/>
<text x="1024.05" y="688.8" font-size="10" fill="#0000FF" text-anchor="end" textLength="26.46" lengthAdjust="spacingAndGlyphs" stroke="#0000FF" stroke-width="0.15">Seg-F</text>
<path d="M1116 686.5H1126" stroke="#008800" stroke-width="1" fill="none" />
<path d="M1126.5 687 L1131.5 681.5 L1146.5 681.5 L1146.5 692.5 L1131.5 692.5Z" fill="#FCF4F4"/>
<path d="M1131 681.5H1146.5V692.5H1131" stroke="#0000FF" fill="none"/>
<path d="M1131 681.5H1132L1127 687H1126ZM1126 687H1127L1132 692.5H1131Z" fill="#0000FF"/>
<text x="1148.45" y="691.5" font-size="10" fill="#0000FF" textLength="27.00" lengthAdjust="spacingAndGlyphs" stroke="#0000FF" stroke-width="0.15">Seg-E</text>
<path d="M1056 696.5H1066" stroke="#880000" stroke-width="1" fill="none" />
<path d="M1106 696.5H1116" stroke="#880000" stroke-width="1" fill="none" />
<text x="1064.55" y="692.5" font-size="10" fill="#0000FF" text-anchor="end" textLength="5.04" lengthAdjust="spacingAndGlyphs" stroke="#0000FF" stroke-width="0.15">9</text>
<text x="1070.75" y="696.5" font-size="10" fill="#0000FF" textLength="5.04" lengthAdjust="spacingAndGlyphs" stroke="#0000FF" stroke-width="0.15">9</text>
<text x="1107.95" y="692.5" font-size="10" fill="#0000FF" textLength="10.97" lengthAdjust="spacingAndGlyphs" stroke="#0000FF" stroke-width="0.15">10</text>
<text x="1102.05" y="696.5" font-size="10" fill="#0000FF" text-anchor="end" textLength="10.97" lengthAdjust="spacingAndGlyphs" stroke="#0000FF" stroke-width="0.15">10</text>
<path d="M1116 696.5H1126" stroke="#008800" stroke-width="1" fill="none" />
<path d="M1126.5 697 L1131.5 691.5 L1146.5 691.5 L1146.5 702.5 L1131.5 702.5Z" fill="#FCF4F4"/>
<path d="M1131 691.5H1146.5V702.5H1131" stroke="#0000FF" fill="none"/>
<path d="M1131 691.5H1132L1127 697H1126ZM1126 697H1127L1132 702.5H1131Z" fill="#0000FF"/>
<text x="1148.45" y="698.5" font-size="10" fill="#0000FF" textLength="28.33" lengthAdjust="spacingAndGlyphs" stroke="#0000FF" stroke-width="0.15">Seg-G</text>
<path d="M356 461h4v1h1v2h-1v1h-4z" fill="#CC0000"/>
<path d="M376 461h4v1h1v2h-1v1h-4z" fill="#CC0000"/>
<path d="M396 461h4v1h1v2h-1v1h-4z" fill="#CC0000"/>
<path d="M426 411h4v1h1v2h-1v1h-4z" fill="#CC0000"/>
<path d="M426 451h4v1h1v2h-1v1h-4z" fill="#CC0000"/>
<path d="M446 481h4v1h1v2h-1v1h-4z" fill="#CC0000"/>
<path d="M586 371h4v1h1v2h-1v1h-4z" fill="#CC0000"/>
<path d="M586 451h4v1h1v2h-1v1h-4z" fill="#CC0000"/>
<path d="M546 471h4v1h1v2h-1v1h-4z" fill="#CC0000"/>
<path d="M646 461h4v1h1v2h-1v1h-4z" fill="#CC0000"/>
<path d="M666 461h4v1h1v2h-1v1h-4z" fill="#CC0000"/>
<path d="M366 621h4v1h1v2h-1v1h-4z" fill="#CC0000"/>
<path d="M456 621h4v1h1v2h-1v1h-4z" fill="#CC0000"/>
<path d="M744 615h4v1h1v2h-1v1h-4z" fill="#CC0000"/>
<path d="M864 415h4v1h1v2h-1v1h-4z" fill="#CC0000"/>
<path d="M994 485h4v1h1v2h-1v1h-4z" fill="#CC0000"/>
<path d="M1002 495h4v1h1v2h-1v1h-4z" fill="#CC0000"/>
<text x="438.5" y="332.7" font-size="12.6" fill="#0000FF" textLength="128.70" lengthAdjust="spacingAndGlyphs" style="stroke:#fff;stroke-width:.1px">CT Amplifier/Rectifier</text>
<text x="620.5" y="362.7" font-size="12.6" fill="#0000FF" textLength="270.50" lengthAdjust="spacingAndGlyphs" style="stroke:#fff;stroke-width:.1px">MCP6L02 can also be used in place of LM358</text>
</g>
<g font-family="Liberation Sans, sans-serif">
<rect x="0" y="69" width="1457" height="22" fill="#f4f6f5"/>
<rect x="0" y="90" width="1456" height="1" fill="#929292"/>
<path d="M8.5 79V90M18.5 85V90M28.5 85V90M38.5 85V90M48.5 85V90M58.5 73V90M68.5 85V90M78.5 85V90M88.5 85V90M98.5 85V90M108.5 79V90M118.5 85V90M128.5 85V90M138.5 85V90M148.5 85V90M158.5 73V90M168.5 85V90M178.5 85V90M188.5 85V90M198.5 85V90M208.5 79V90M218.5 85V90M228.5 85V90M238.5 85V90M248.5 85V90M258.5 73V90M268.5 85V90M278.5 85V90M288.5 85V90M298.5 85V90M308.5 79V90M318.5 85V90M328.5 85V90M338.5 85V90M348.5 85V90M358.5 73V90M368.5 85V90M378.5 85V90M388.5 85V90M398.5 85V90M408.5 79V90M418.5 85V90M428.5 85V90M438.5 85V90M448.5 85V90M458.5 73V90M468.5 85V90M478.5 85V90M488.5 85V90M498.5 85V90M508.5 79V90M518.5 85V90M528.5 85V90M538.5 85V90M548.5 85V90M558.5 73V90M568.5 85V90M578.5 85V90M588.5 85V90M598.5 85V90M608.5 79V90M618.5 85V90M628.5 85V90M638.5 85V90M648.5 85V90M658.5 73V90M668.5 85V90M678.5 85V90M688.5 85V90M698.5 85V90M708.5 79V90M718.5 85V90M728.5 85V90M738.5 85V90M748.5 85V90M758.5 73V90M768.5 85V90M778.5 85V90M788.5 85V90M798.5 85V90M808.5 79V90M818.5 85V90M828.5 85V90M838.5 85V90M848.5 85V90M858.5 73V90M868.5 85V90M878.5 85V90M888.5 85V90M898.5 85V90M908.5 79V90M918.5 85V90M928.5 85V90M938.5 85V90M948.5 85V90M958.5 73V90M968.5 85V90M978.5 85V90M988.5 85V90M998.5 85V90M1008.5 79V90M1018.5 85V90M1028.5 85V90M1038.5 85V90M1048.5 85V90M1058.5 73V90M1068.5 85V90M1078.5 85V90M1088.5 85V90M1098.5 85V90M1108.5 79V90M1118.5 85V90M1128.5 85V90M1138.5 85V90M1148.5 85V90M1158.5 73V90M1168.5 85V90M1178.5 85V90M1188.5 85V90M1198.5 85V90M1208.5 79V90M1218.5 85V90M1228.5 85V90M1238.5 85V90M1248.5 85V90M1258.5 73V90M1268.5 85V90M1278.5 85V90M1288.5 85V90M1298.5 85V90M1308.5 79V90M1318.5 85V90M1328.5 85V90M1338.5 85V90M1348.5 85V90M1358.5 73V90M1368.5 85V90M1378.5 85V90M1388.5 85V90M1398.5 85V90M1408.5 79V90M1418.5 85V90M1428.5 85V90M1438.5 85V90M1448.5 85V90" stroke="#989898" stroke-width="1" fill="none" shape-rendering="crispEdges"/>
<text x="61" y="81.7" font-size="10.3" fill="#6f7f90">-200</text>
<text x="161" y="81.7" font-size="10.3" fill="#6f7f90">-100</text>
<text x="261" y="81.7" font-size="10.3" fill="#6f7f90">0</text>
<text x="361" y="81.7" font-size="10.3" fill="#6f7f90">100</text>
<text x="461" y="81.7" font-size="10.3" fill="#6f7f90">200</text>
<text x="561" y="81.7" font-size="10.3" fill="#6f7f90">300</text>
<text x="661" y="81.7" font-size="10.3" fill="#6f7f90">400</text>
<text x="761" y="81.7" font-size="10.3" fill="#6f7f90">500</text>
<text x="861" y="81.7" font-size="10.3" fill="#6f7f90">600</text>
<text x="961" y="81.7" font-size="10.3" fill="#6f7f90">700</text>
<text x="1061" y="81.7" font-size="10.3" fill="#6f7f90">800</text>
<text x="1161" y="81.7" font-size="10.3" fill="#6f7f90">900</text>
<text x="1261" y="81.7" font-size="10.3" fill="#6f7f90">1000</text>
<text x="1361" y="81.7" font-size="10.3" fill="#6f7f90">1100</text>
<rect x="1374" y="72" width="1" height="19" fill="#1e7fd8"/>
<rect x="0" y="38" width="1457" height="31" fill="#dcdcdc"/>
<rect x="0" y="38" width="1457" height="1" fill="#d2d2d2"/>
<rect x="0" y="39" width="42" height="29" fill="#ececec"/>
<rect x="43" y="39" width="160" height="29" fill="#f8f8f8"/>
<rect x="204" y="39" width="160" height="29" fill="#ececec"/>
<rect x="42" y="39" width="1" height="29" fill="#d2d2d2"/>
<rect x="203" y="39" width="1" height="29" fill="#d2d2d2"/>
<rect x="364" y="39" width="1" height="29" fill="#d2d2d2"/>
<rect x="0" y="68" width="1457" height="1" fill="#d0d0d0"/>
<text x="-9.5" y="58.8" font-size="15" fill="#26262e" textLength="26" lengthAdjust="spacingAndGlyphs">tart</text>
<text x="73" y="58.8" font-size="15" fill="#22222e" textLength="84.8" lengthAdjust="spacingAndGlyphs">*NewProject</text>
<text x="233.8" y="58.8" font-size="15" fill="#22222e" textLength="65" lengthAdjust="spacingAndGlyphs">NEW_PCB</text>
<g fill="none" stroke="#4a90e2" stroke-width="1.2"><path d="M55.6 51.2V48.6Q55.6 47 57.2 47H63.6Q65.2 47 65.2 48.6V50M65.2 58.4V59.8Q65.2 61.4 63.6 61.4H57.2Q55.6 61.4 55.6 59.8V56.6M53.6 52.5H57.6M53.6 55.6H57.6"/><rect x="63.1" y="50" width="4" height="8.5" rx="1.4" fill="#fff" stroke="#6f86ee"/></g>
<g fill="none" stroke="#4f7a5c" stroke-width="1.1"><rect x="214.5" y="47.5" width="13" height="13"/><path d="M217.5 50.7H227.5M219.5 53.7H227.5M214.5 56.7L219.5 53.7M223 56.7H227.5"/><circle cx="221.2" cy="56.7" r="1.6"/></g>
<rect x="0" y="0" width="1461" height="38" fill="#fefefe"/>
<g fill="none" stroke="#333333" stroke-width="1.15" stroke-linejoin="round" stroke-linecap="round">
<path d="M-4 5.7H3.2L7.4 10V21.6H-4M-4 12.6H3.6V21.6M-2 15.6H1.5M-2 18.4H1.5" stroke-linecap="butt"/>
<path d="M50.5 10.3H61.4Q63.2 10.3 63.2 12.1V15.9Q63.2 17.7 61.4 17.7H51.4" stroke-linecap="butt"/><path d="M50.9 8.3L46.9 10.3L50.9 12.3Z" fill="#333333" stroke-width="0.3"/>
<path d="M127.8 15.6L137.4 6Q139.6 3.9 141.7 6L142.6 6.9Q144.6 9 142.5 11.1L132.3 20.1M136.6 7.2L141.4 12M127.8 15.6L132.3 20.1L126.6 21.8Z"/><path d="M128.9 19.3L127 21.4L129 21Z" fill="#333333"/>
<path d="M191 22.2C187.5 17.5 184.4 13.8 184.4 10.5A6.6 6.6 0 0 1 197.6 10.5C197.6 13.8 194.5 17.5 191 22.2Z"/><circle cx="191" cy="10.4" r="2.2"/>
<path d="M348.9 13.1C351.5 9.6 355 7.6 359 7.6C363 7.6 366.5 9.6 369.1 13.1C366.5 16.6 363 18.6 359 18.6C355 18.6 351.5 16.6 348.9 13.1Z" stroke-width="1.15"/><circle cx="359.1" cy="13.1" r="4.8" stroke-width="1.15"/>
<circle cx="413.3" cy="11.5" r="6.5"/><path d="M410 11.5H416.6M413.3 8.2V14.8" stroke-linecap="butt"/><path d="M417.4 16.9L418.6 15.9L423.3 20.1L422.1 21.4Z" stroke-width="1"/>
<path d="M502.3 5.2L501.7 10.6L506.6 13.1L501.2 14.2L500.2 19.8L497.5 14.9L492 15.6L495.8 11.6L493.4 6.6L498.4 8.9Z" stroke-width="1.2"/><path d="M501.3 15.3L502.7 14L508.8 20L507.4 21.4Z" stroke-width="1"/>
<rect x="529.6" y="5.6" width="20.8" height="14.8" rx="1.2" stroke-width="1.4"/><rect x="533.2" y="9" width="7.4" height="2.6" rx="0.8" stroke-width="1"/><rect x="533.2" y="14.8" width="7.4" height="2.6" rx="0.8" stroke-width="1"/><path d="M540.6 10.3H543.5M540.6 16.1H543.5" stroke-width="1"/><circle cx="545.2" cy="10.3" r="1.7" stroke-width="1"/><circle cx="545.2" cy="16.1" r="1.7" stroke-width="1"/>
<path d="M590.6 4.6A4.4 4.4 0 0 0 590.9 12.2V20.4Q590.9 21.8 592.6 21.8Q594.3 21.8 594.3 20.4V12.2A4.4 4.4 0 0 0 594.6 4.6V8.6H590.6Z" stroke-width="1.1"/><path d="M601 5V11.4M599 11.4H603V15H599ZM599.4 15V21Q599.4 21.9 601 21.9Q602.6 21.9 602.6 21V15M601 16.5V20" stroke-width="1.1"/>
<rect x="642.5" y="3.8" width="19.2" height="19.2" stroke-width="1.1" stroke-linejoin="miter"/>
<rect x="684.5" y="5.6" width="15.3" height="15.8" stroke-width="1.1" stroke-linejoin="miter"/><path d="M684.5 5.6H699.8L684.5 21.4Z" fill="#2c2c30" stroke="none"/>
<g stroke-width="1.1"><circle cx="742.3" cy="13.4" r="2.2"/><circle cx="753.5" cy="8.3" r="2.2"/><circle cx="753.5" cy="18.7" r="2.2"/><path d="M744.3 12.4L751.5 9.3M744.3 14.4L751.5 17.7"/></g>
<path d="M780.4 12.3A8.6 8.6 0 1 1 783.7 19.9" stroke-width="1.8" stroke-linecap="butt"/><path d="M777.9 13.5L782.4 10.9L783 14.7Z" fill="#333333" stroke-width="0.5"/><path d="M789.3 9.2V16.3H793.2" stroke-width="1.3" stroke-linecap="butt" stroke-linejoin="miter"/>
<path d="M834.86 11.55 L837.16 11.81 L837.16 14.99 L834.86 15.25 L834.13 17.01 L835.58 18.83 L833.33 21.08 L831.51 19.63 L829.75 20.36 L829.49 22.66 L826.31 22.66 L826.05 20.36 L824.29 19.63 L822.47 21.08 L820.22 18.83 L821.67 17.01 L820.94 15.25 L818.64 14.99 L818.64 11.81 L820.94 11.55 L821.67 9.79 L820.22 7.97 L822.47 5.72 L824.29 7.17 L826.05 6.44 L826.31 4.14 L829.49 4.14 L829.75 6.44 L831.51 7.17 L833.33 5.72 L835.58 7.97 L834.13 9.79Z" stroke-width="1.05"/><circle cx="827.9" cy="13.4" r="3.4" stroke-width="1.2"/>
<path d="M886.2 17.7A9.1 6.4 0 1 1 889.65 16.4L888.4 20.6Z" stroke-width="1.2"/><path d="M883.8 8V12.8M883.8 14.4V15.6" stroke-linecap="butt" stroke-width="1.3"/>
</g>
<path d="M18.1 11.9H26.1L22.1 16Z" fill="#333333"/>
<path d="M154.1 11.9H162.1L158.1 16Z" fill="#333333"/>
<path d="M209.9 11.9H217.9L213.9 16Z" fill="#333333"/>
<path d="M378.1 12H386.1L382.1 16.1Z" fill="#333333"/>
<path d="M559 12H567L563 16.1Z" fill="#333333"/>
<path d="M615.1 12H623.1L619.1 16.1Z" fill="#333333"/>
<path d="M711 12H719L715 16.1Z" fill="#333333"/>
<path d="M847.1 12H855.1L851.1 16.1Z" fill="#333333"/>
<path d="M902.9 12H910.9L906.9 16.1Z" fill="#333333"/>
<text x="644.2" y="15.8" font-size="7.2" fill="#55556e" textLength="16" lengthAdjust="spacingAndGlyphs">BOM</text>
<text x="434.3" y="16.8" font-size="14.7" fill="#2a2a33" textLength="36" lengthAdjust="spacingAndGlyphs">100%</text>
<g fill="none" stroke="#e6e6e6" stroke-width="1.4">
<path d="M98.6 17.7H88Q86.3 17.7 86.3 16V12Q86.3 10.3 88 10.3H99" /><path d="M98.9 8.2L103 10.3L98.9 12.4Z" fill="#e6e6e6" stroke-width="0.6"/>
<path d="M240 4V23" stroke-width="2"/><rect x="243" y="7.9" width="6" height="4.2"/><rect x="243" y="15.5" width="11" height="3.8"/>
<path d="M294.5 20.6H311.5L301.5 14V20.6M294.5 20.6L300.2 8.2V20.6" stroke-width="1.5"/><path d="M300 6.6Q306 7 306.6 13" /><path d="M298.4 6.6L301 5V8.4Z" fill="#e6e6e6" stroke-width="0.5"/>
</g>
<path d="M266.1 11.9H274.1L270.1 16Z" fill="#e6e6e6"/>
<path d="M322 11.9H330L326 16Z" fill="#e6e6e6"/>
<rect x="1457" y="38" width="4" height="730" fill="#fdfdfd"/><rect x="1457.7" y="38" width="1" height="730" fill="#c2c2c2"/>
<path d="M1460.4 40V768" stroke="#8c8ca2" stroke-width="1.3" stroke-dasharray="1 1.6"/>
<rect x="-10" y="82.5" width="76.5" height="113" fill="#000" opacity="0.28" filter="url(#sh)"/>
<rect x="-10" y="82" width="76" height="112" fill="#f9f9f9"/>
<rect x="-10" y="82" width="76" height="23" fill="#eeeeee"/>
<rect x="-10" y="105" width="76" height="1" fill="#dddddd"/>
<rect x="50.2" y="91.6" width="11.5" height="1.6" fill="#85859a"/>
<rect x="-10" y="233.5" width="93.5" height="141" fill="#000" opacity="0.28" filter="url(#sh)"/>
<rect x="-10" y="233" width="93" height="140" fill="#f9f9f9"/>
<rect x="-10" y="233" width="93" height="23" fill="#eeeeee"/>
<rect x="-10" y="256" width="93" height="1" fill="#dddddd"/>
<rect x="67.2" y="243" width="11.5" height="1.6" fill="#85859a"/>
<text x="-16.2" y="97.8" font-size="13.4" fill="#33222e">ools</text>
<text x="-7.2" y="249" font-size="13.6" fill="#33222e" textLength="32" lengthAdjust="spacingAndGlyphs">Tools</text>
<g fill="none" stroke="#2e2e33" stroke-width="1.1" stroke-linejoin="miter">
<path d="M0.3 117Q3 120 1.6 125"/>
<path d="M21.6 131.2A8.1 8.1 0 1 1 28.8 124.6"/><path d="M18.3 123.4H23.3M20.8 120.9V125.9" stroke-width="1"/>
<path d="M41.6 115.8L54.6 123.6L41.6 131.2L45.9 123.6Z"/>
<path d="M0.2 144V158" stroke="#2a3f8f" stroke-width="1.2"/>
<path d="M11.2 143.6H24.9L30.6 151L24.9 158.4H11.2L17 151Z"/>
<circle cx="49.1" cy="151.1" r="8.1"/>
<path d="M0.3 174.8V182Q0.3 185.4 -2 185.6" stroke="#2a3f8f" stroke-width="1.3"/>
<path d="M13.5 171.8H27.5M13.5 171.8V185"/><path d="M27 170L30.2 171.8L27 173.6ZM11.7 184.5L13.5 187.8L15.3 184.5Z" fill="#333" stroke-width="0.5"/><circle cx="13.5" cy="171.8" r="1.5" fill="#333" stroke="none"/>
<path d="M13.2 267.8L27 280.7"/>
<rect x="40.6" y="267.6" width="15" height="9.8"/><path d="M48.1 277.4V281.8"/>
<path d="M-1 300.6H2.2L0.6 302.8Z" fill="#333" stroke="none"/>
<path d="M10.6 295.9H22.8L29.7 302.1L22.8 308.3H10.6Z"/>
<path d="M39.6 301.6H56.2M48 301.6V310.4"/>
<path d="M8.5 338.4L12 334.6M12 334.6L19.3 326.4L21.6 328.4L14.2 336.6ZM20.4 327.4Q23.5 322.5 26.5 324.2T32.5 323" stroke-width="1"/>
<circle cx="39.8" cy="332.7" r="1.5" stroke-width="1"/><path d="M41.3 332.7H53.8M54.5 329.3V335.6M57.6 329.3V335.6" stroke-width="1.1"/>
</g>
<text x="48.1" y="275.5" font-size="7" font-weight="bold" fill="#333" text-anchor="middle">N</text>
<text x="47.9" y="299.2" font-size="6.3" font-weight="bold" fill="#444" text-anchor="middle" textLength="16.2" lengthAdjust="spacingAndGlyphs">VCC</text>
<text x="48" y="331.2" font-size="6" font-weight="bold" fill="#333" text-anchor="middle">1</text>
</g>
</svg></body></html>
